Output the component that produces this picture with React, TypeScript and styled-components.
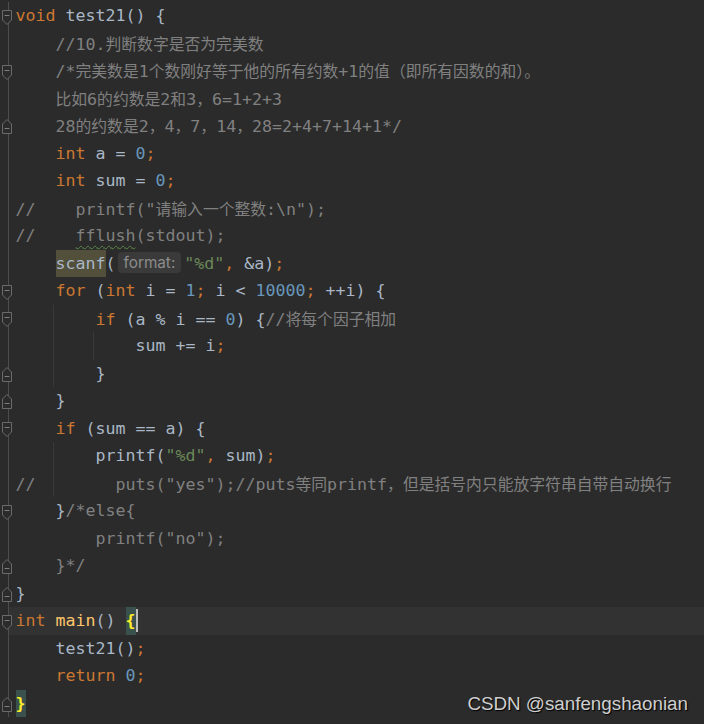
import React from 'react';
import styled, { createGlobalStyle } from 'styled-components';

const Global = createGlobalStyle`
  html, body { margin: 0; padding: 0; background: #2b2b2b; }
  body { width: 704px; height: 724px; overflow: hidden; }
`;

type Kind = 'kw' | 'num' | 'str' | 'cm' | 'id' | 'fn' | 'brace' | 'usage' | 'wavy' | 'hint';
type Tok = [Kind, string];
type Fold = 'open' | 'close';
interface Line {
  toks: Tok[];
  fold?: Fold;
  guides?: number[];
  current?: boolean;
  caret?: boolean;
}

const colors: Record<string, string> = {
  kw: '#cc7832',
  num: '#6897bb',
  str: '#6a8759',
  cm: '#808080',
  id: '#a9b7c6',
  fn: '#ffc66d',
};

const LINES: Line[] = [
  { fold: 'open', toks: [['kw', 'void'], ['id', ' test21() {']] },
  { toks: [['id', '    '], ['cm', '//10.判断数字是否为完美数']] },
  { fold: 'open', toks: [['id', '    '], ['cm', '/*完美数是1个数刚好等于他的所有约数+1的值（即所有因数的和）。']] },
  { toks: [['cm', '    比如6的约数是2和3，6=1+2+3']] },
  { fold: 'close', toks: [['cm', '    28的约数是2，4，7，14，28=2+4+7+14+1*/']] },
  { toks: [['id', '    '], ['kw', 'int'], ['id', ' a = '], ['num', '0'], ['kw', ';']] },
  { toks: [['id', '    '], ['kw', 'int'], ['id', ' sum = '], ['num', '0'], ['kw', ';']] },
  { toks: [['cm', '//    printf("请输入一个整数:\\n");']] },
  { toks: [['cm', '//    '], ['wavy', 'fflush'], ['cm', '(stdout);']] },
  {
    toks: [
      ['id', '    '], ['usage', 'scanf'], ['id', '('], ['hint', 'format:'],
      ['str', '"%d"'], ['kw', ','], ['id', ' &a)'], ['kw', ';'],
    ],
  },
  {
    fold: 'open',
    toks: [
      ['id', '    '], ['kw', 'for'], ['id', ' ('], ['kw', 'int'], ['id', ' i = '], ['num', '1'],
      ['kw', ';'], ['id', ' i < '], ['num', '10000'], ['kw', ';'], ['id', ' ++i) {'],
    ],
  },
  {
    fold: 'open',
    guides: [4],
    toks: [['id', '        '], ['kw', 'if'], ['id', ' (a % i == '], ['num', '0'], ['id', ') {'], ['cm', '//将每个因子相加']],
  },
  { guides: [4, 8], toks: [['id', '            sum += i'], ['kw', ';']] },
  { fold: 'close', guides: [4], toks: [['id', '        }']] },
  { fold: 'close', toks: [['id', '    }']] },
  { fold: 'open', toks: [['id', '    '], ['kw', 'if'], ['id', ' (sum == a) {']] },
  { guides: [4], toks: [['id', '        printf('], ['str', '"%d"'], ['kw', ','], ['id', ' sum)'], ['kw', ';']] },
  { guides: [4], toks: [['cm', '//        puts("yes");//puts等同printf，但是括号内只能放字符串自带自动换行']] },
  { fold: 'open', toks: [['id', '    }'], ['cm', '/*else{']] },
  { toks: [['cm', '        printf("no");']] },
  { fold: 'close', toks: [['cm', '    }*/']] },
  { fold: 'close', toks: [['id', '}']] },
  {
    fold: 'open',
    current: true,
    caret: true,
    toks: [['kw', 'int'], ['id', ' '], ['fn', 'main'], ['id', '() '], ['brace', '{']],
  },
  { toks: [['id', '    test21()'], ['kw', ';']] },
  { toks: [['id', '    '], ['kw', 'return'], ['id', ' '], ['num', '0'], ['kw', ';']] },
  { fold: 'close', toks: [['brace', '}']] },
];

const Page = styled.div`
  position: relative;
  width: 704px;
  height: 724px;
  overflow: hidden;
  background: #2b2b2b;
`;

const Editor = styled.div`
  display: flex;
  flex-direction: column;
  padding-top: 2.25px;
`;

const Row = styled.div<{ $current?: boolean }>`
  display: flex;
  height: 27.5px;
  background: ${(p) => (p.$current ? '#323232' : 'transparent')};
`;

const Gutter = styled.div<{ $fold?: Fold }>`
  flex: 0 0 15.5px;
  display: flex;
  align-items: center;
  padding-left: 1px;
  box-sizing: border-box;
  background: linear-gradient(to right, #2b2b2b 0 8px, #4d4d4d 8px 9px, transparent 9px);
  svg {
    display: block;
    margin-top: ${(p) => (p.$fold === 'open' ? '3px' : '2px')};
  }
`;

const Code = styled.div`
  position: relative;
  flex: 1;
  white-space: pre;
  font-family: "DejaVu Sans Mono", "Liberation Mono", monospace;
  font-size: 16.61px;
  line-height: 27.5px;
  color: #a9b7c6;
`;

const Guide = styled.span<{ $col: number }>`
  position: absolute;
  top: 0;
  bottom: 0;
  left: ${(p) => p.$col * 10 - 3}px;
  width: 1px;
  background: #393939;
`;

const Tk = styled.span<{ $c: string }>`
  color: ${(p) => p.$c};
`;

const Usage = styled.span`
  display: inline-block;
  height: 27.5px;
  background: #524f3a;
  color: #a9b7c6;
  vertical-align: top;
`;

const Brace = styled.span`
  display: inline-block;
  height: 27.5px;
  background: #3b514d;
  color: #ffef28;
  font-weight: bold;
  vertical-align: top;
`;

const Wavy = styled.span`
  color: #808080;
  text-decoration: underline wavy #5c8a4a;
  text-decoration-thickness: 1px;
  text-underline-offset: 4px;
`;

const Hint = styled.span`
  display: inline-block;
  height: 21px;
  line-height: 21px;
  margin: 0 3px 0 2px;
  padding: 0 6px;
  border-radius: 4px;
  background: #3a3a3a;
  color: #8c8c8c;
  font-family: Inter, "Noto Sans", sans-serif;
  font-size: 15.3px;
  vertical-align: 1px;
`;

const Caret = styled.span`
  display: inline-block;
  width: 2px;
  height: 23px;
  background: #bbbbbb;
  vertical-align: -6px;
`;

const Cjk = styled.span`
  font-family: "Noto Sans CJK SC", sans-serif;
  font-size: 15.8px;
`;

const Watermark = styled.div`
  position: absolute;
  right: 16px;
  bottom: 9px;
  font-family: "Liberation Sans", Arial, sans-serif;
  font-size: 18.8px;
  color: #cfcfcf;
  text-shadow: 1px 1px 1px #000;
  white-space: nowrap;
`;

const CJK_RE = /([\u3000-\u303f\u4e00-\u9fff\uff00-\uffef]+)/;

function Txt({ text }: { text: string }) {
  const parts = text.split(CJK_RE);
  return (
    <>
      {parts.map((p, i) =>
        p === '' ? null : CJK_RE.test(p) ? <Cjk key={i}>{p}</Cjk> : <React.Fragment key={i}>{p}</React.Fragment>
      )}
    </>
  );
}

function FoldIcon({ kind }: { kind: Fold }) {
  return kind === 'open' ? (
    <svg width="12" height="16" viewBox="0 0 12 16">
      <path d="M1.5 0.5 H10.5 V10 L6 14.5 L1.5 10 Z" fill="#2b2b2b" stroke="#6a6a6a" strokeWidth="1" />
      <path d="M3.5 5.5 H8.5" stroke="#7d7d7d" strokeWidth="1" />
    </svg>
  ) : (
    <svg width="12" height="16" viewBox="0 0 12 16">
      <path d="M6 0.5 L10.5 5 V14.5 H1.5 V5 Z" fill="#2b2b2b" stroke="#6a6a6a" strokeWidth="1" />
      <path d="M3.5 9.5 H8.5" stroke="#7d7d7d" strokeWidth="1" />
    </svg>
  );
}

function Token({ tok }: { tok: Tok }) {
  const [k, t] = tok;
  switch (k) {
    case 'usage':
      return <Usage>{t}</Usage>;
    case 'brace':
      return <Brace>{t}</Brace>;
    case 'wavy':
      return <Wavy>{t}</Wavy>;
    case 'hint':
      return <Hint>{t}</Hint>;
    default:
      return (
        <Tk $c={colors[k]}>
          <Txt text={t} />
        </Tk>
      );
  }
}

export default function App() {
  return (
    <Page>
      <Global />
      <Editor>
        {LINES.map((line, i) => (
          <Row key={i} $current={line.current}>
            <Gutter $fold={line.fold}>{line.fold && <FoldIcon kind={line.fold} />}</Gutter>
            <Code>
              {line.guides?.map((g) => <Guide key={g} $col={g} />)}
              {line.toks.map((tok, j) => (
                <Token key={j} tok={tok} />
              ))}
              {line.caret && <Caret />}
            </Code>
          </Row>
        ))}
      </Editor>
      <Watermark>CSDN @sanfengshaonian</Watermark>
    </Page>
  );
}
